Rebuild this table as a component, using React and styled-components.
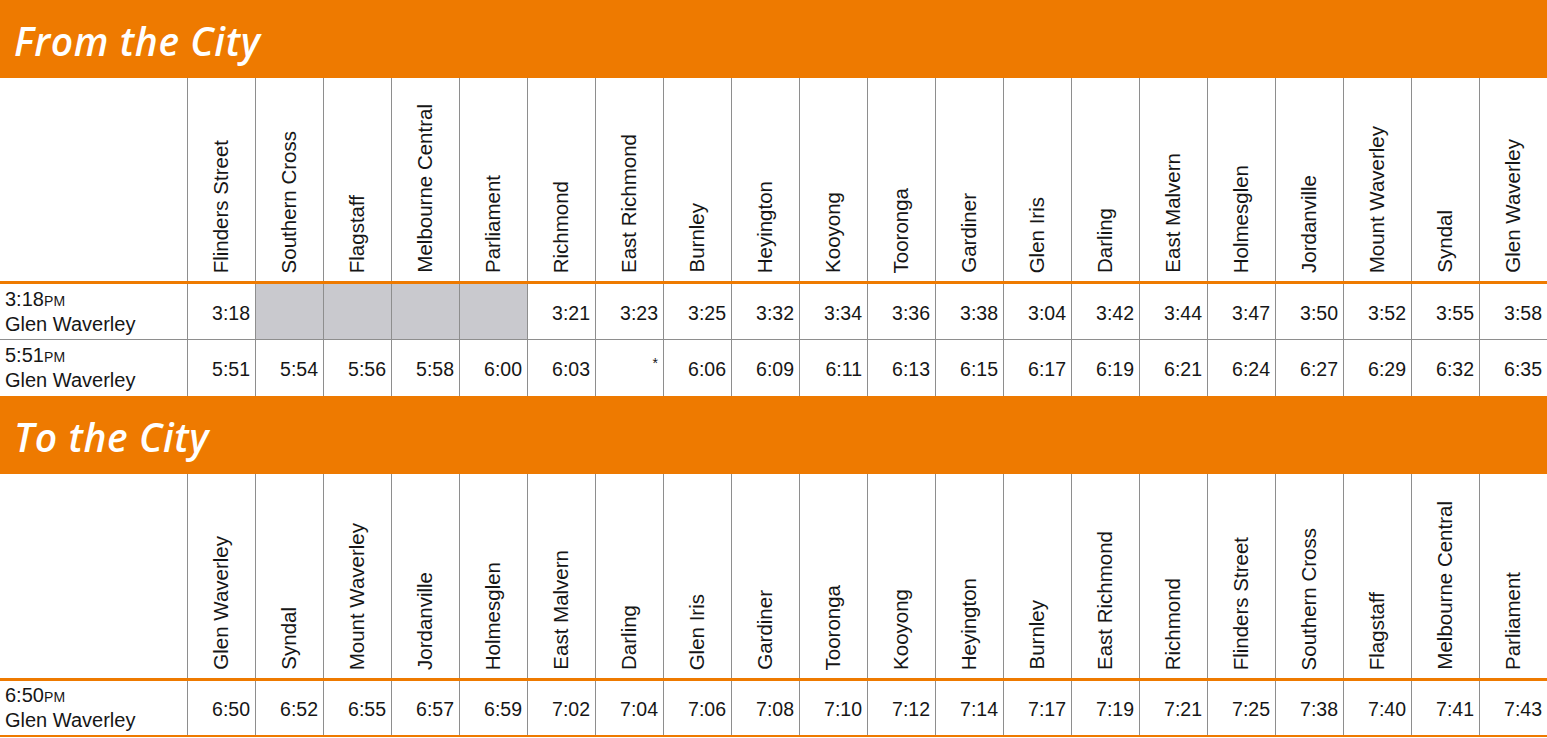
import React from 'react';
import styled, { createGlobalStyle } from 'styled-components';

const ORANGE = '#ee7a00';
const LINE = '#8e8e8e';

const GlobalStyle = createGlobalStyle`
  html, body {
    margin: 0;
    padding: 0;
    background: #fff;
  }
  body {
    font-family: 'Liberation Sans', Arial, sans-serif;
    color: #161616;
  }
`;

const sections = [
  {
    title: 'From the City',
    stations: [
      'Flinders Street', 'Southern Cross', 'Flagstaff', 'Melbourne Central', 'Parliament',
      'Richmond', 'East Richmond', 'Burnley', 'Heyington', 'Kooyong', 'Tooronga',
      'Gardiner', 'Glen Iris', 'Darling', 'East Malvern', 'Holmesglen', 'Jordanville',
      'Mount Waverley', 'Syndal', 'Glen Waverley',
    ],
    headerHeight: 203,
    trips: [
      {
        time: '3:18',
        dest: 'Glen Waverley',
        height: 55,
        times: ['3:18', null, null, null, null, '3:21', '3:23', '3:25', '3:32', '3:34', '3:36',
          '3:38', '3:04', '3:42', '3:44', '3:47', '3:50', '3:52', '3:55', '3:58'],
      },
      {
        time: '5:51',
        dest: 'Glen Waverley',
        height: 56,
        times: ['5:51', '5:54', '5:56', '5:58', '6:00', '6:03', '*', '6:06', '6:09', '6:11',
          '6:13', '6:15', '6:17', '6:19', '6:21', '6:24', '6:27', '6:29', '6:32', '6:35'],
      },
    ],
  },
  {
    title: 'To the City',
    stations: [
      'Glen Waverley', 'Syndal', 'Mount Waverley', 'Jordanville', 'Holmesglen',
      'East Malvern', 'Darling', 'Glen Iris', 'Gardiner', 'Tooronga', 'Kooyong',
      'Heyington', 'Burnley', 'East Richmond', 'Richmond', 'Flinders Street',
      'Southern Cross', 'Flagstaff', 'Melbourne Central', 'Parliament',
    ],
    headerHeight: 204,
    closed: true,
    trips: [
      {
        time: '6:50',
        dest: 'Glen Waverley',
        height: 54,
        times: ['6:50', '6:52', '6:55', '6:57', '6:59', '7:02', '7:04', '7:06', '7:08', '7:10',
          '7:12', '7:14', '7:17', '7:19', '7:21', '7:25', '7:38', '7:40', '7:41', '7:43'],
      },
    ],
  },
];

export default function App() {
  return (
    <>
      <GlobalStyle />
      <Page>
        {sections.map(section => (
          <Section key={section.title} closed={section.closed}>
            <Band>
              <BandTitle>{section.title}</BandTitle>
            </Band>
            <HeaderRow height={section.headerHeight}>
              <Corner />
              {section.stations.map(name => (
                <StationCell key={name}>
                  <StationName>{name}</StationName>
                </StationCell>
              ))}
            </HeaderRow>
            {section.trips.map((trip, i) => (
              <TripRow
                key={trip.time}
                height={trip.height}
                divider={i < section.trips.length - 1}
              >
                <TripLabel>
                  <span>
                    {trip.time}
                    <Meridiem>PM</Meridiem>
                  </span>
                  <span>{trip.dest}</span>
                </TripLabel>
                {trip.times.map((t, j) =>
                  t === null ? (
                    <Cell key={j} blank />
                  ) : t === '*' ? (
                    <Cell key={j}>
                      <Star>*</Star>
                    </Cell>
                  ) : (
                    <Cell key={j}>{t}</Cell>
                  )
                )}
              </TripRow>
            ))}
          </Section>
        ))}
      </Page>
    </>
  );
}

const Page = styled.div`
  width: 1547px;
  display: flex;
  flex-direction: column;
`;

const Section = styled.section`
  display: flex;
  flex-direction: column;
  border-bottom: ${p => (p.closed ? `2px solid ${ORANGE}` : 'none')};
`;

const Band = styled.div`
  height: 78px;
  background: ${ORANGE};
  display: flex;
  align-items: center;
  padding-left: 14px;
`;

const BandTitle = styled.h2`
  margin: 0;
  padding-top: 2px;
  font-family: 'Open Sans', 'Liberation Sans', sans-serif;
  font-style: italic;
  font-weight: 600;
  font-size: 39px;
  letter-spacing: 0.6px;
  color: #fff;
`;

const grid = `
  display: grid;
  grid-template-columns: 187px repeat(20, 68px);
`;

const HeaderRow = styled.div`
  ${grid}
  height: ${p => p.height}px;
  border-bottom: 3px solid ${ORANGE};
`;

const Corner = styled.div``;

const StationCell = styled.div`
  border-left: 1.5px solid ${LINE};
  display: flex;
  align-items: flex-end;
  justify-content: center;
  padding-bottom: 8px;
`;

const StationName = styled.span`
  writing-mode: vertical-rl;
  transform: rotate(180deg);
  white-space: nowrap;
  font-size: 20.5px;
  line-height: 1;
`;

const TripRow = styled.div`
  ${grid}
  height: ${p => p.height}px;
  border-bottom: ${p => (p.divider ? `1.5px solid ${LINE}` : 'none')};
`;

const TripLabel = styled.div`
  display: flex;
  flex-direction: column;
  justify-content: center;
  padding-left: 5px;
  font-size: 20px;
  line-height: 23px;
`;

const Meridiem = styled.span`
  font-size: 14px;
  letter-spacing: 0.3px;
`;

const Cell = styled.div`
  border-left: 1.5px solid ${LINE};
  background: ${p => (p.blank ? '#c9c9ce' : 'transparent')};
  display: flex;
  align-items: center;
  justify-content: flex-end;
  padding-right: 5px;
  font-size: 19.5px;
  padding-top: 3px;
`;

const Star = styled.span`
  align-self: flex-start;
  margin-top: 12px;
  font-size: 14px;
`;
